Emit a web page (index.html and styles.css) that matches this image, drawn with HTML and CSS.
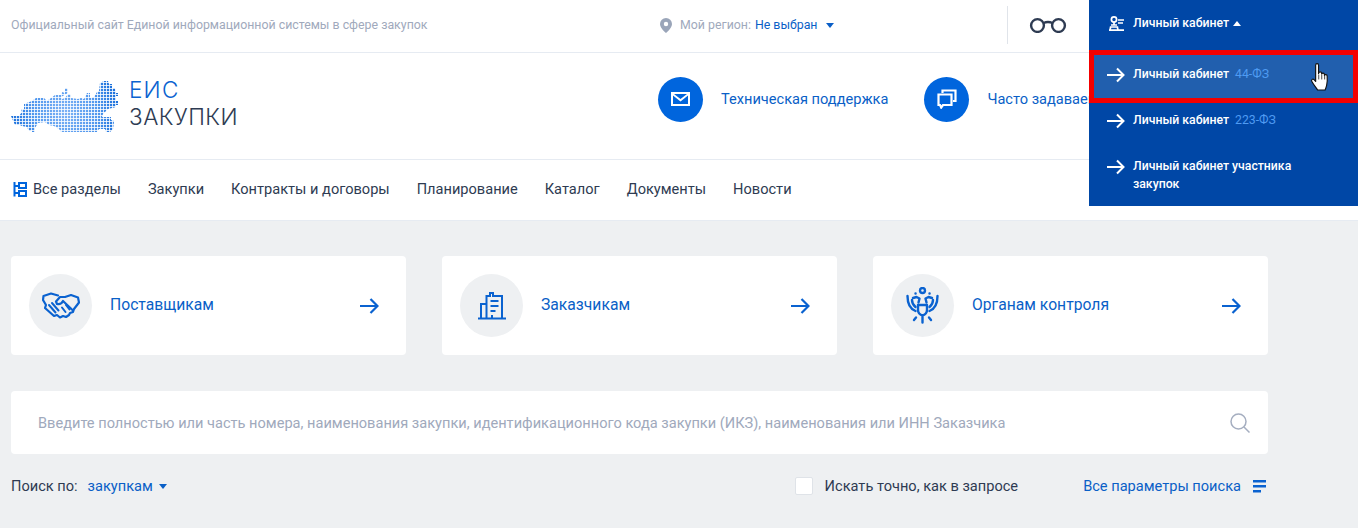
FILE: index.html
```html
<!DOCTYPE html>
<html lang="ru">
<head>
<meta charset="utf-8">
<title>ЕИС Закупки</title>
<link rel="stylesheet" href="styles.css">
</head>
<body>
<header class="header">
  <div class="topbar">
    <span class="tagline">Официальный сайт Единой информационной системы в сфере закупок</span>
    <div class="region">
      <svg class="pin" width="12" height="15" viewBox="0 0 12 15"><path fill-rule="evenodd" d="M6 0a6 6 0 0 1 6 6c0 3.400-3.600 7-6 9-2.400-2-6-5.600-6-9a6 6 0 0 1 6-6zm0 3.800a2.200 2.200 0 1 0 0 4.400 2.200 2.200 0 0 0 0-4.400z"/></svg>
      <span class="region-label">Мой регион:</span>
      <a class="region-value">Не выбран</a>
      <span class="caret caret-region"></span>
    </div>
    <div class="a11y">
      <svg width="38" height="16" viewBox="0 0 38 16" fill="none" stroke="#2e3b52" stroke-width="2.400"><circle cx="8.500" cy="8.500" r="6.400"/><circle cx="29.500" cy="8.500" r="6.400"/><path d="M14.500 6q4.500-2 9 0"/></svg>
    </div>
  </div>

  <div class="brand-row">
    <div class="logo">
      <svg class="logo-map" width="111" height="56" viewBox="11 76 111 56">
        <defs>
          <pattern id="dots" x="11" y="77" width="3" height="3" patternUnits="userSpaceOnUse"><rect width="2.200" height="2.200" fill="#fff"/></pattern>
          <mask id="map-mask" maskUnits="userSpaceOnUse" x="11" y="76" width="111" height="56">
            <path fill="url(#dots)" d="M11 116h8l3-4-1-3h3v-5l8-3 4-3h8l3 3 8-6h6l1-3 3 1v-5h3v5l-7 4 1 2 3-1 3-4h3v4l7 1 3-1 3 1 3-6h3v5l4-1 3-5 2-1 1-8 4-2h4l1 3h3v4h3l1 5h2v3h-2v5h2v4h-2v2l-8 2-5 5-1 3h9v3l3 1-1 8-3 3v2h-3l-2-5h-6l-3 4h-5l-4 4h-6v2h-13v-3l-5-2-4-5-5-3-5-1-4-3-7 1-3 5v8h-3v-5h-3l-2-4-5-1-2-1h-5z"/>
          </mask>
          <radialGradient id="map-grad" gradientUnits="userSpaceOnUse" cx="65" cy="112" r="58">
            <stop offset="0" stop-color="#7db2f5"/><stop offset=".55" stop-color="#5298ee"/><stop offset="1" stop-color="#1169d8"/>
          </radialGradient>
        </defs>
        <rect x="11" y="76" width="111" height="56" fill="url(#map-grad)" mask="url(#map-mask)"/>
      </svg>
      <div class="logo-text"><span class="logo-eis">ЕИС</span><span class="logo-zak">ЗАКУПКИ</span></div>
    </div>
    <a class="quick quick-support">
      <span class="quick-icon"><svg width="19" height="14" viewBox="0 0 19 14"><path fill-rule="evenodd" fill="#fff" d="M0 0h19v14H0zm3 2 6.500 5L16 2zM2 3.500V12h15V3.500L9.500 9.500z"/></svg></span>
      <span class="quick-text">Техническая поддержка</span>
    </a>
    <a class="quick quick-faq">
      <span class="quick-icon"><svg width="20" height="20" viewBox="0 0 20 20" fill="none" stroke="#fff" stroke-width="2.200"><path d="M5.500 4V1.500h13V12H16"/><path d="M1.500 5.500H14.500V16H6l-1.800 2.500L3 16H1.500z"/></svg></span>
      <span class="quick-text">Часто задаваемые вопросы</span>
    </a>
  </div>

  <nav class="nav">
    <a class="nav-item nav-all">
      <svg width="15" height="15" viewBox="0 0 15 15" fill="none" stroke="#0065dd" stroke-width="2"><path d="M2.500 0v14.500M2.500 4H6M2.500 11H6"/><rect x="7" y="1" width="7" height="5"/><rect x="7" y="9" width="7" height="5"/></svg>
      Все разделы
    </a>
    <a class="nav-item">Закупки</a>
    <a class="nav-item">Контракты и договоры</a>
    <a class="nav-item">Планирование</a>
    <a class="nav-item">Каталог</a>
    <a class="nav-item">Документы</a>
    <a class="nav-item">Новости</a>
  </nav>
</header>

<aside class="cabinet">
  <div class="cabinet-head">
    <svg width="15" height="15" viewBox="0 0 15 15" fill="none" stroke="#fff" stroke-width="1.700"><circle cx="5" cy="3.500" r="2.600"/><path d="M5 6v2.500M2 9h6M1 14.200l.6-3.200h6.800l.6 3.200zM9 4h6M9 7h5M0 14.200h15"/></svg>
    <span>Личный кабинет</span>
    <span class="caret-up"></span>
  </div>
  <a class="cabinet-item cabinet-item-active">
    <svg class="cab-arrow" width="18" height="16" viewBox="0 0 18 16"><path d="M0 8h16.500M10 1.500 16.500 8 10 14.500"/></svg>
    <span>Личный кабинет <em>44-ФЗ</em></span>
    <svg class="cursor" width="22" height="30" viewBox="0 0 20 31"><path fill="#fff" stroke="#111" stroke-width="1.200" stroke-linejoin="round" d="M5.500 2.200c0-2 3-2 3 0V11l.2-.8c.3-1.500 2.800-1.500 3 .2v1c.4-1.400 2.700-1.300 2.900.4v1c.5-1.300 2.700-1.100 2.800.6.300 3.500.2 7-.6 10-.5 2-1 3.200-1.500 4.500H7.500c-1-2-4-5-6-9-.8-1.700 1-3 2.300-1.800l1.700 2z"/><path stroke="#111" stroke-width=".8" d="M8.700 12v5M11.800 12v5M14.800 13v4"/></svg>
  </a>
  <a class="cabinet-item">
    <svg class="cab-arrow" width="18" height="16" viewBox="0 0 18 16"><path d="M0 8h16.500M10 1.500 16.500 8 10 14.500"/></svg>
    <span>Личный кабинет <em>223-ФЗ</em></span>
  </a>
  <a class="cabinet-item">
    <svg class="cab-arrow" width="18" height="16" viewBox="0 0 18 16"><path d="M0 8h16.500M10 1.500 16.500 8 10 14.500"/></svg>
    <span>Личный кабинет участника<br>закупок</span>
  </a>
</aside>

<main class="main">
  <section class="cards">
    <a class="card">
      <span class="card-icon">
        <svg width="38" height="27" viewBox="0 0 38 27" fill="none" stroke="#0a62d0" stroke-width="2.200" stroke-linejoin="round" stroke-linecap="round"><path d="M16 3.500 9 1.500 1.500 4 1 8l3 5-1 3 9 8 3-1 3 2.500 3-1.500 3 1 3-2 1-2 3-1 1-3 5-6.500-1-5-7-2.500-6 2h-5l-4 4.500 1 2.500q4 1 6-3l10 9.500"/><path d="M7 13l6.500 7.500M10 11l6.500 7.500M23.500 20l-3.500-4.500M27.500 17.500l-3.500-4.500" stroke-width="2"/></svg>
      </span>
      <span class="card-title">Поставщикам</span>
      <svg class="card-arrow" width="19" height="16" viewBox="0 0 19 16"><path d="M0 8h17.500M10.500 1 17.500 8 10.500 15"/></svg>
    </a>
    <a class="card">
      <span class="card-icon">
        <svg width="28" height="28" viewBox="0 0 28 28" fill="none" stroke="#0a62d0" stroke-width="2"><path d="M0 26.500h28M8.500 26V4h3.500V1h3v3h9v22.500M8.500 12H3v14.500M12.500 9h8M12.500 14h8M12.500 19h5M14 26v-3"/></svg>
      </span>
      <span class="card-title">Заказчикам</span>
      <svg class="card-arrow" width="19" height="16" viewBox="0 0 19 16"><path d="M0 8h17.500M10.500 1 17.500 8 10.500 15"/></svg>
    </a>
    <a class="card">
      <span class="card-icon">
        <svg width="33" height="37" viewBox="0 0 33 37" fill="none" stroke="#0a62d0" stroke-width="2.400" stroke-linecap="round" stroke-linejoin="round"><circle cx="16.500" cy="3.500" r="2.500"/><path d="M9.500 6.500h.1M23.500 6.500h.1M7 11l3.500-1 3 1.500-1 4M26 11l-3.500-1-3 1.500 1 4"/><path d="M1.500 9c0 8 3 13 8 15M31.500 9c0 8-3 13-8 15M6 13c0 3 1 5 3.500 7M27 13c0 3-1 5-3.500 7"/><path d="M12 18h9v5q0 4-4.500 5.500Q12 27 12 23zM16.500 30v5.500M10 30.500l-2 2.500M23 30.500l2 2.500"/></svg>
      </span>
      <span class="card-title">Органам контроля</span>
      <svg class="card-arrow" width="19" height="16" viewBox="0 0 19 16"><path d="M0 8h17.500M10.500 1 17.500 8 10.500 15"/></svg>
    </a>
  </section>

  <div class="search">
    <span class="search-placeholder">Введите полностью или часть номера, наименования закупки, идентификационного кода закупки (ИКЗ), наименования или ИНН Заказчика</span>
    <svg width="20" height="20" viewBox="0 0 20 20" fill="none" stroke="#a5aec0" stroke-width="1.500"><circle cx="8.500" cy="8.500" r="7.500"/><path d="M14 14l5.500 5.500"/></svg>
  </div>

  <div class="options">
    <span class="opt-label">Поиск по:</span>
    <a class="opt-value">закупкам</a>
    <span class="caret caret-opt"></span>
    <label class="exact"><span class="checkbox"></span>Искать точно, как в запросе</label>
    <a class="all-params">Все параметры поиска
      <svg width="13" height="13" viewBox="0 0 13 13" fill="#0a62d0"><path d="M0 0h13v2.500H0zM0 5h13v2.500H0zM0 10h8v2.500H0z"/></svg>
    </a>
  </div>
</main>
</body>
</html>
```

FILE: styles.css
```css
* { box-sizing: border-box; }
html, body { margin: 0; height: 100%; }
body {
  position: relative;
  overflow: hidden;
  background: #eef0f2;
  font-family: Roboto, "Liberation Sans", sans-serif;
  color: #2e3b52;
}
a { color: inherit; text-decoration: none; }

.header { background: #fff; }

.topbar {
  display: flex;
  align-items: center;
  height: 53px;
  padding: 0 0 2px 11px;
  border-bottom: 1px solid #e6ebf2;
}
.tagline { width: 649px; flex: none; font-size: 12.350px; color: #a0a9bc; }
.region { display: flex; align-items: center; width: 347px; flex: none; font-size: 12.350px; }
.pin { fill: #9aa5b9; margin-right: 8px; }
.region-label { color: #a0a9bc; margin-right: 4px; }
.region-value { color: #0a5fc7; }
.caret {
  display: inline-block;
  border-left: 4.500px solid transparent;
  border-right: 4.500px solid transparent;
  border-top: 5px solid #0a5fc7;
}
.caret-region { margin-left: 9px; }
.a11y {
  display: flex;
  align-items: center;
  height: 38px;
  padding-left: 21px;
  border-left: 1px solid #e0e4ea;
}

.brand-row {
  display: flex;
  align-items: center;
  height: 107px;
  padding: 0 0 14px 11px;
  border-bottom: 1px solid #e6ebf2;
  white-space: nowrap;
}
.logo { display: flex; align-items: center; width: 647px; flex: none; }
.logo-map { flex: none; margin-top: 9px; }
.logo-text { display: flex; flex-direction: column; margin-left: 7px; margin-top: 8px; font-family: Inter, Lato, sans-serif; font-weight: 300; line-height: 27px; }
.logo-eis { font-size: 22.500px; color: #0a62d0; letter-spacing: 1.200px; }
.logo-zak { font-size: 22.500px; color: #2e3b52; letter-spacing: .5px; }
.quick { display: flex; align-items: center; flex: none; color: #0a5fc7; font-size: 14.600px; }
.quick-icon {
  display: flex;
  align-items: center;
  justify-content: center;
  width: 45px;
  height: 45px;
  border-radius: 50%;
  background: #0065dd;
  margin-right: 18px;
}
.quick-support { margin-right: 36px; }

.nav {
  display: flex;
  align-items: center;
  gap: 27px;
  height: 61px;
  padding: 0 0 2px 12px;
  border-bottom: 1px solid #e6ebf2;
  font-size: 14.600px;
}
.nav-all { display: flex; align-items: center; gap: 6px; }

.cabinet {
  position: absolute;
  top: 0;
  left: 1089px;
  width: 269px;
  height: 206px;
  background: #0047a6;
  color: #fff;
  font-size: 12.250px;
  font-weight: 500;
  line-height: 18px;
}
.cabinet-head {
  display: flex;
  align-items: center;
  height: 50px;
  padding: 0 0 4px 20px;
}
.cabinet-head svg { margin-right: 9px; }
.caret-up {
  margin-left: 4px;
  border-left: 4.500px solid transparent;
  border-right: 4.500px solid transparent;
  border-bottom: 5px solid #fff;
}
.cabinet-item {
  position: relative;
  display: flex;
  align-items: flex-start;
  padding: 15px 0 13px 18px;
}
.cabinet-item em { font-style: normal; font-weight: 400; color: #4f9bf2; margin-left: 3px; }
.cab-arrow { flex: none; margin: 2px 8px 0 0; fill: none; stroke: #fff; stroke-width: 2; }
.cabinet-item-active {
  height: 53px;
  margin-bottom: -7px;
  padding: 10px 0 0 13px;
  border: 5px solid #f30000;
  background: #215fae;
}
.cursor { position: absolute; left: 215px; top: 8px; }

.main { padding: 35px 0 0 11px; width: 1268px; }
.cards { display: flex; gap: 36px; }
.card {
  display: flex;
  align-items: center;
  width: 395px;
  height: 99px;
  padding: 0 27px 0 18px;
  background: #fff;
  border-radius: 4px;
  color: #0a5fc7;
}
.card-icon {
  display: flex;
  align-items: center;
  justify-content: center;
  flex: none;
  width: 63px;
  height: 63px;
  border-radius: 50%;
  background: #eef0f2;
  margin-right: 18px;
}
.card-title { flex: 1; font-size: 15.700px; position: relative; bottom: 1px; }
.card-arrow { fill: none; stroke: #0a62d0; stroke-width: 2.200; }

.search {
  display: flex;
  align-items: center;
  justify-content: space-between;
  height: 63px;
  margin-top: 36px;
  padding: 0 18px 0 27px;
  background: #fff;
  border-radius: 4px;
}
.search-placeholder { font-size: 14.600px; color: #a0a9bc; white-space: nowrap; }

.options { display: flex; align-items: center; margin-top: 22px; height: 20px; padding-right: 2px; font-size: 14.600px; }
.opt-label { margin-right: 10px; }
.opt-value { color: #0a5fc7; }
.caret-opt { margin-left: 6px; }
.exact { display: flex; align-items: center; margin-left: auto; margin-right: 65px; }
.checkbox {
  width: 18px;
  height: 18px;
  margin-right: 12px;
  background: #fff;
  border: 1px solid #dfe3e8;
  border-radius: 2px;
}
.all-params { display: flex; align-items: center; gap: 12px; color: #0a5fc7; }
```
